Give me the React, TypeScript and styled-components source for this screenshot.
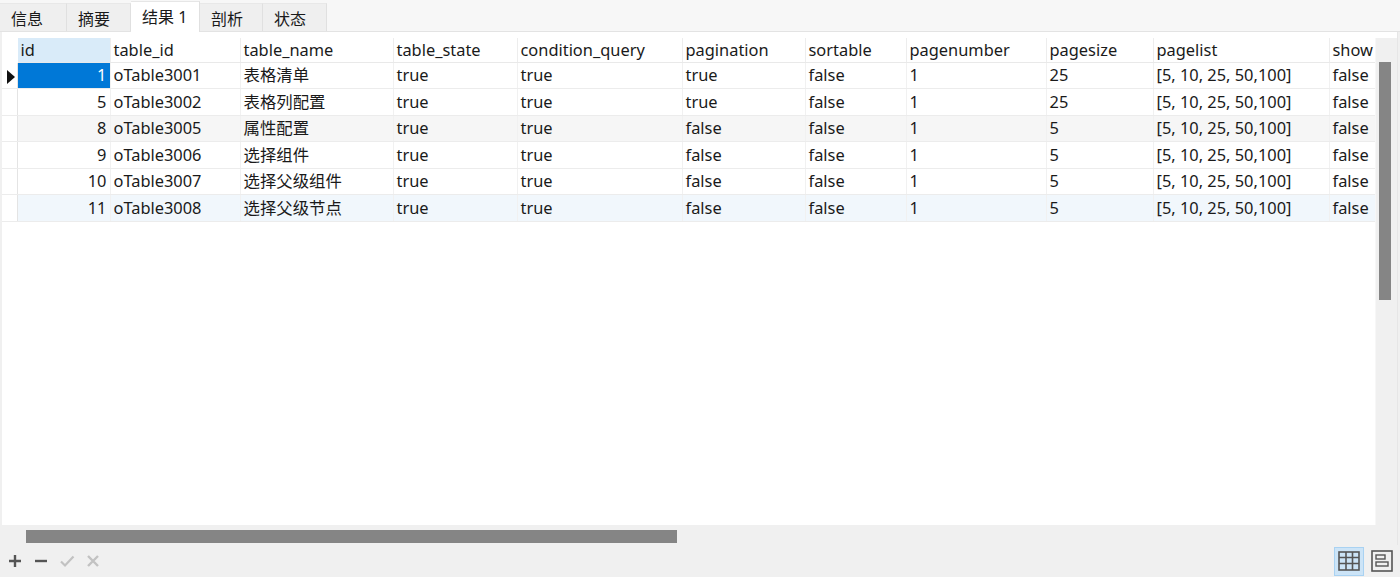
import React from 'react'
import styled, { createGlobalStyle } from 'styled-components'

const GlobalStyle = createGlobalStyle`
  html, body {
    margin: 0;
    padding: 0;
    background: #f0f0f0;
  }
  body {
    font-family: "Noto Sans", "Noto Sans CJK SC", sans-serif;
    color: #1a1a1a;
  }
`

const columns = [
  { key: 'id', title: 'id', width: 93, align: 'right' },
  { key: 'table_id', title: 'table_id', width: 130 },
  { key: 'table_name', title: 'table_name', width: 153 },
  { key: 'table_state', title: 'table_state', width: 124 },
  { key: 'condition_query', title: 'condition_query', width: 165 },
  { key: 'pagination', title: 'pagination', width: 123 },
  { key: 'sortable', title: 'sortable', width: 101 },
  { key: 'pagenumber', title: 'pagenumber', width: 140 },
  { key: 'pagesize', title: 'pagesize', width: 107 },
  { key: 'pagelist', title: 'pagelist', width: 176 },
  { key: 'show', title: 'show', width: 100 },
]

const rows = [
  ['1', 'oTable3001', '表格清单', 'true', 'true', 'true', 'false', '1', '25', '[5, 10, 25, 50,100]', 'false'],
  ['5', 'oTable3002', '表格列配置', 'true', 'true', 'true', 'false', '1', '25', '[5, 10, 25, 50,100]', 'false'],
  ['8', 'oTable3005', '属性配置', 'true', 'true', 'false', 'false', '1', '5', '[5, 10, 25, 50,100]', 'false'],
  ['9', 'oTable3006', '选择组件', 'true', 'true', 'false', 'false', '1', '5', '[5, 10, 25, 50,100]', 'false'],
  ['10', 'oTable3007', '选择父级组件', 'true', 'true', 'false', 'false', '1', '5', '[5, 10, 25, 50,100]', 'false'],
  ['11', 'oTable3008', '选择父级节点', 'true', 'true', 'false', 'false', '1', '5', '[5, 10, 25, 50,100]', 'false'],
]

const rowTints: Record<number, string> = { 2: '#f6f6f6', 5: '#f1f7fc' }

const tabs = ['信息', '摘要', '结果 1', '剖析', '状态']
const tabWidths = [67, 64, 69, 63, 64]

const Window = styled.div`
  width: 1400px;
  height: 579px;
  display: flex;
  flex-direction: column;
  background: #f0f0f0;
  overflow: hidden;
`

const TabBar = styled.div`
  height: 32px;
  display: flex;
  align-items: flex-end;
  background: #f7f7f7;
  border-bottom: 1px solid #e3e3e3;
  box-sizing: border-box;
`

const Tab = styled.div<{ $active?: boolean; $w: number }>`
  width: ${({ $w }) => $w}px;
  height: ${({ $active }) => ($active ? 31 : 28)}px;
  box-sizing: border-box;
  display: flex;
  align-items: center;
  padding-left: 11px;
  padding-bottom: ${({ $active }) => ($active ? 3 : 0)}px;
  font-size: 16px;
  color: #1a1a1a;
  background: ${({ $active }) => ($active ? '#ffffff' : '#efefef')};
  border-right: 1px solid #e0e0e0;
  border-top: 1px solid ${({ $active }) => ($active ? '#e6e6e6' : '#e8e8e8')};
  margin-bottom: ${({ $active }) => ($active ? -1 : 0)}px;
`

const Panel = styled.div`
  margin: 0 2px;
  height: 513px;
  display: grid;
  grid-template-columns: 1fr 22px;
  grid-template-rows: 1fr 20px;
  background: #ffffff;
  border-right: 1px solid #e6e6e6;
`

const GridArea = styled.div`
  overflow: hidden;
  padding-top: 6px;
  background: #ffffff;
`

const Table = styled.table`
  border-collapse: collapse;
  table-layout: fixed;
  width: ${15 + columns.reduce((s, c) => s + c.width, 0)}px;
  font-size: 16.4px;
  line-height: 20px;
`

const HeadCell = styled.th<{ $lit?: boolean; $blank?: boolean }>`
  height: 24px;
  padding: 1px 3px 0;
  text-align: left;
  font-weight: 400;
  white-space: nowrap;
  overflow: hidden;
  background: ${({ $lit }) => ($lit ? '#d9ebf9' : '#ffffff')};
  border-right: 1px solid ${({ $blank }) => ($blank ? 'transparent' : '#ededed')};
  border-bottom: 1px solid ${({ $blank }) => ($blank ? 'transparent' : '#e9e9e9')};
  box-sizing: border-box;
`

const Row = styled.tr<{ $tint?: string }>`
  height: 26.5px;
  background: ${({ $tint }) => $tint || '#ffffff'};
`

const Cell = styled.td<{ $align?: string; $selected?: boolean }>`
  padding: 0 3px;
  white-space: nowrap;
  overflow: hidden;
  text-align: ${({ $align }) => $align || 'left'};
  background: ${({ $selected }) => ($selected ? '#0078d7' : 'transparent')};
  color: ${({ $selected }) => ($selected ? '#ffffff' : '#1a1a1a')};
  border-right: 1px solid #f1f1f1;
  border-bottom: 1px solid #ececec;
  box-sizing: border-box;
`

const MarkerCell = styled.td`
  padding: 0;
  border-right: 1px solid #e4e4e4;
  border-bottom: 1px solid #ececec;
  background: #ffffff;
  text-align: center;
  vertical-align: middle;
`

const Caret = styled.span`
  display: inline-block;
  width: 0;
  height: 0;
  border-top: 7px solid transparent;
  border-bottom: 7px solid transparent;
  border-left: 8px solid #111;
  margin-left: 3px;
  vertical-align: middle;
`

const VTrack = styled.div`
  background: #f0f0f0;
  margin-top: 6px;
  padding: 24px 6px 0 3px;
  border-left: 1px solid #f7f7f7;
`

const VThumb = styled.div`
  height: 238px;
  background: #858585;
`

const HTrack = styled.div`
  grid-column: 1 / 3;
  background: #f0f0f0;
  padding: 5px 0 0 24px;
`

const HThumb = styled.div`
  width: 651px;
  height: 13px;
  background: #858585;
`

const Toolbar = styled.div`
  flex: 1;
  display: flex;
  align-items: center;
  justify-content: space-between;
  padding: 0 6px 0 7px;
  border-bottom: 2px solid #ffffff;
`

const ToolGroup = styled.div<{ $gap: number }>`
  display: flex;
  align-items: center;
  gap: ${({ $gap }) => $gap}px;
`

const ToolButton = styled.div<{ $on?: boolean; $size?: number }>`
  width: ${({ $on, $size }) => ($on ? 30 : $size || 16)}px;
  height: ${({ $on, $size }) => ($on ? 29 : $size || 16)}px;
  display: flex;
  align-items: center;
  justify-content: center;
  background: ${({ $on }) => ($on ? '#cce4f7' : 'transparent')};
  border: ${({ $on }) => ($on ? '1px solid #a9d2f2' : 'none')};
  box-sizing: border-box;
`

const Plus = () => (
  <svg width="16" height="16" viewBox="0 0 16 16">
    <path d="M8 2v12M2 8h12" stroke="#555" strokeWidth="2.4" />
  </svg>
)

const Minus = () => (
  <svg width="16" height="16" viewBox="0 0 16 16">
    <path d="M2 8h12" stroke="#555" strokeWidth="2.4" />
  </svg>
)

const Check = () => (
  <svg width="16" height="16" viewBox="0 0 16 16">
    <path d="M2 8.5l4 4L14.5 3.5" stroke="#c2c2c2" strokeWidth="2.2" fill="none" />
  </svg>
)

const Cross = () => (
  <svg width="16" height="16" viewBox="0 0 16 16">
    <path d="M3 3l10 10M13 3L3 13" stroke="#c2c2c2" strokeWidth="2.4" />
  </svg>
)

const GridIcon = () => (
  <svg width="22" height="20" viewBox="0 0 22 20">
    <rect x="1" y="1" width="20" height="18" fill="none" stroke="#555" strokeWidth="1.6" />
    <path d="M1 6.5h20M1 12.5h20M8 1v18M14.5 1v18" stroke="#555" strokeWidth="1.6" />
  </svg>
)

const FormIcon = () => (
  <svg width="22" height="22" viewBox="0 0 22 22">
    <rect x="1" y="1" width="20" height="20" fill="none" stroke="#555" strokeWidth="1.6" />
    <rect x="5" y="5" width="9" height="4" fill="none" stroke="#555" strokeWidth="1.4" />
    <rect x="5" y="12" width="12" height="4" fill="none" stroke="#555" strokeWidth="1.4" />
  </svg>
)

export default function App() {
  return (
    <>
      <GlobalStyle />
      <Window>
        <TabBar>
          {tabs.map((t, i) => (
            <Tab key={t} $w={tabWidths[i]} $active={i === 2}>
              {t}
            </Tab>
          ))}
        </TabBar>

        <Panel>
          <GridArea>
            <Table>
              <colgroup>
                <col style={{ width: 15 }} />
                {columns.map(c => (
                  <col key={c.key} style={{ width: c.width }} />
                ))}
              </colgroup>
              <thead>
                <tr>
                  <HeadCell $blank />
                  {columns.map((c, i) => (
                    <HeadCell key={c.key} $lit={i === 0}>
                      {c.title}
                    </HeadCell>
                  ))}
                </tr>
              </thead>
              <tbody>
                {rows.map((r, ri) => (
                  <Row key={ri} $tint={rowTints[ri]}>
                    <MarkerCell>{ri === 0 && <Caret />}</MarkerCell>
                    {r.map((v, ci) => (
                      <Cell
                        key={ci}
                        $align={columns[ci].align}
                        $selected={ri === 0 && ci === 0}
                      >
                        {v}
                      </Cell>
                    ))}
                  </Row>
                ))}
              </tbody>
            </Table>
          </GridArea>
          <VTrack>
            <VThumb />
          </VTrack>
          <HTrack>
            <HThumb />
          </HTrack>
        </Panel>

        <Toolbar>
          <ToolGroup $gap={10}>
            <ToolButton><Plus /></ToolButton>
            <ToolButton><Minus /></ToolButton>
            <ToolButton><Check /></ToolButton>
            <ToolButton><Cross /></ToolButton>
          </ToolGroup>
          <ToolGroup $gap={6}>
            <ToolButton $on><GridIcon /></ToolButton>
            <ToolButton $size={24}><FormIcon /></ToolButton>
          </ToolGroup>
        </Toolbar>
      </Window>
    </>
  )
}
